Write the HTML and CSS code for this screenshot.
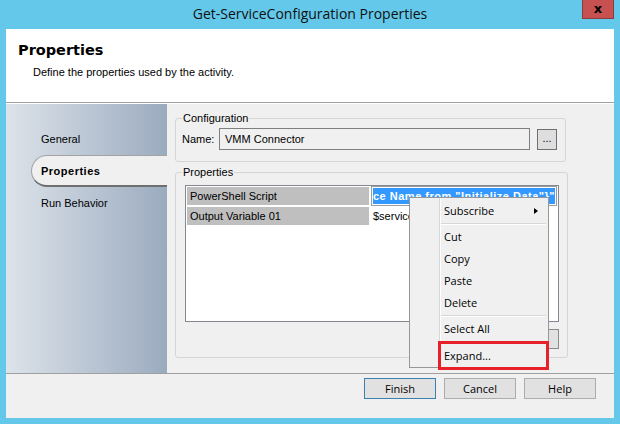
FILE: index.html
```html
<!DOCTYPE html>
<html>
<head>
<meta charset="utf-8">
<title>Get-ServiceConfiguration Properties</title>
<link rel="stylesheet" href="styles.css">
</head>
<body>
<div class="window">
  <header class="titlebar">
    <div class="title">Get-ServiceConfiguration Properties</div>
    <div class="close">x</div>
  </header>
  <div class="client">
    <div class="banner">
      <h1>Properties</h1>
      <p>Define the properties used by the activity.</p>
    </div>
    <div class="main">
      <nav class="nav">
        <div class="nav-item">General</div>
        <div class="nav-item active">Properties</div>
        <div class="nav-item">Run Behavior</div>
      </nav>
      <section class="content">
        <fieldset class="group config">
          <legend>Configuration</legend>
          <div class="name-row">
            <span class="label">Name:</span>
            <div class="textbox">VMM Connector</div>
            <div class="browse">...</div>
          </div>
        </fieldset>
        <fieldset class="group props">
          <legend>Properties</legend>
          <div class="grid">
            <div class="row">
              <div class="cell-name">PowerShell Script</div>
              <div class="cell-value editing"><span class="sel">ce Name from "Initialize Data"}"</span></div>
            </div>
            <div class="row">
              <div class="cell-name">Output Variable 01</div>
              <div class="cell-value">$service</div>
            </div>
          </div>
          <div class="grid-actions"><div class="btn opt"></div></div>
        </fieldset>
      </section>
    </div>
    <div class="footer">
      <div class="btn default">Finish</div>
      <div class="btn">Cancel</div>
      <div class="btn">Help</div>
    </div>
  </div>
  <div class="menu">
    <div class="mi sub">Subscribe<span class="arrow"></span></div>
    <div class="sep"></div>
    <div class="mi">Cut</div>
    <div class="mi">Copy</div>
    <div class="mi">Paste</div>
    <div class="mi">Delete</div>
    <div class="sep"></div>
    <div class="mi">Select All</div>
    <div class="sep last"></div>
    <div class="mi">Expand...</div>
  </div>
  <div class="highlight"></div>
</div>
</body>
</html>
```
FILE: styles.css
```css
* { box-sizing: border-box; }
html, body { margin: 0; padding: 0; }
body {
  width: 620px;
  height: 424px;
  overflow: hidden;
  background: #63c8ea;
  font-family: "Liberation Sans", Arial, sans-serif;
  font-size: 11px;
  color: #000;
}
.window {
  position: relative;
  width: 620px;
  height: 424px;
  display: flex;
  flex-direction: column;
}
.titlebar {
  height: 29px;
  flex: none;
  display: grid;
  grid-template-columns: 1fr auto 1fr;
  align-items: start;
}
.title {
  grid-column: 2;
  font-family: "Open Sans", sans-serif;
  font-size: 14px;
  line-height: 28px;
  color: #111;
}
.close {
  grid-column: 3;
  justify-self: end;
  margin-right: 6px;
  width: 32px;
  height: 19px;
  background: #c75050;
  border: 1px solid #8e3a3a;
  border-top: 0;
  display: flex;
  align-items: center;
  justify-content: center;
  font-family: "DejaVu Sans", sans-serif;
  font-weight: bold;
  font-size: 13px;
  line-height: 13px;
  padding-bottom: 2px;
  color: #000;
}
.client {
  flex: 1;
  margin: 0 6px 6px;
  background: #f0f0f0;
  display: flex;
  flex-direction: column;
}
.banner {
  height: 74px;
  flex: none;
  background: #fff;
  border-bottom: 1px solid #a0a0a0;
  padding: 13px 0 0 12px;
}
.banner h1 {
  margin: 0;
  font-family: "DejaVu Sans", sans-serif;
  font-weight: bold;
  font-size: 14.5px;
  line-height: 17px;
}
.banner p {
  margin: 7px 0 0 15px;
  line-height: 13px;
}
.main {
  height: 270px;
  flex: none;
  display: flex;
  border-top: 1px solid #fff;
}
.nav {
  width: 161px;
  flex: none;
  background: linear-gradient(to right, #dde3ea, #9babbf);
  padding-top: 19px;
}
.nav-item {
  height: 32px;
  line-height: 32px;
  padding-left: 35px;
}
.nav-item.active {
  margin-left: 25px;
  padding-left: 9px;
  line-height: 30px;
  background: #f0f0f0;
  border: 1px solid #a3a3a3;
  border-right: 0;
  border-bottom: 2px solid #6f6f6f;
  border-radius: 16px 0 0 16px;
  font-weight: bold;
  letter-spacing: 0.5px;
}
.content {
  flex: 1;
  padding: 8px 0 0 8px;
}
.group {
  width: 390px;
  margin: 0;
  border: 1px solid #d5d5d5;
  border-radius: 3px;
  padding: 3px 8px 11px 6px;
}
.group legend {
  padding: 0 1px;
  line-height: 13px;
}
.name-row {
  display: flex;
  align-items: center;
  height: 22px;
}
.label { width: 37px; flex: none; }
.textbox {
  width: 311px;
  height: 22px;
  border: 1px solid #7f7f7f;
  padding-left: 5px;
  line-height: 20px;
  background: #f0f0f0;
}
.browse {
  margin-left: 7px;
  width: 20px;
  height: 21px;
  border: 1px solid #707070;
  background: #dedede;
  text-align: center;
  line-height: 17px;
}
.props {
  margin-top: 4px;
  padding: 6px 8px 8px 6px;
}
.grid {
  margin-left: 3px;
  height: 137px;
  border: 1px solid #828790;
  background: #fff;
  padding: 0 1px 0 0;
}
.row {
  display: flex;
  height: 20px;
  padding: 1px 0 1px 1px;
  gap: 2px;
}
.cell-name {
  width: 182px;
  flex: none;
  background: #bfbfbf;
  padding-left: 3px;
  line-height: 18px;
  white-space: nowrap;
}
.cell-value {
  flex: 1;
  min-width: 0;
  padding-left: 2px;
  line-height: 18px;
  white-space: nowrap;
  overflow: hidden;
}
.cell-value.editing {
  margin: -1px 0;
  border: 1px solid #9c9c9c;
  padding: 1px;
  background: #fff;
}
.sel {
  display: block;
  height: 16px;
  background: #3399ff;
  color: #fff;
  font-weight: bold;
  letter-spacing: 0.5px;
  line-height: 16px;
  overflow: hidden;
}
.grid-actions {
  display: flex;
  justify-content: flex-end;
  margin-top: 7px;
}
.btn {
  width: 72px;
  height: 21px;
  background: #e1e1e1;
  border: 1px solid #adadad;
  font-family: "Open Sans", sans-serif;
  font-size: 11px;
  line-height: 19px;
  text-align: center;
}
.btn.default { border-color: #3c7fb1; }
.btn.opt { width: 120px; height: 20px; border-color: #8a8a8a; }
.footer {
  flex: 1;
  border-top: 1px solid #a0a0a0;
  display: flex;
  justify-content: flex-end;
  align-items: flex-start;
  gap: 8px;
  padding: 4px 18px 0 0;
}
.menu {
  position: absolute;
  left: 409px;
  top: 197px;
  width: 140px;
  border: 1px solid #979797;
  padding: 2px 2px 0 2px;
  background:
    linear-gradient(to right, transparent 29px, #d7d7d7 29px, #d7d7d7 30px, #fff 30px, #fff 31px, transparent 31px),
    #f0f0f0;
  font-family: "Open Sans", sans-serif;
  font-size: 11px;
}
.mi {
  height: 22px;
  line-height: 22px;
  padding-left: 32px;
  display: flex;
  align-items: center;
}
.arrow {
  margin-left: auto;
  margin-right: 8px;
  width: 0;
  height: 0;
  border-left: 4px solid #000;
  border-top: 3.5px solid transparent;
  border-bottom: 3.5px solid transparent;
}
.sep {
  height: 4px;
  margin-left: 29px;
  padding-top: 1px;
}
.sep::before {
  content: "";
  display: block;
  height: 1px;
  background: #d7d7d7;
  box-shadow: 0 1px 0 #fff;
}
.sep.last { height: 5px; padding-top: 2px; }
.highlight {
  position: absolute;
  left: 438px;
  top: 341px;
  width: 111px;
  height: 29px;
  border: 3px solid #e8202a;
}
```
